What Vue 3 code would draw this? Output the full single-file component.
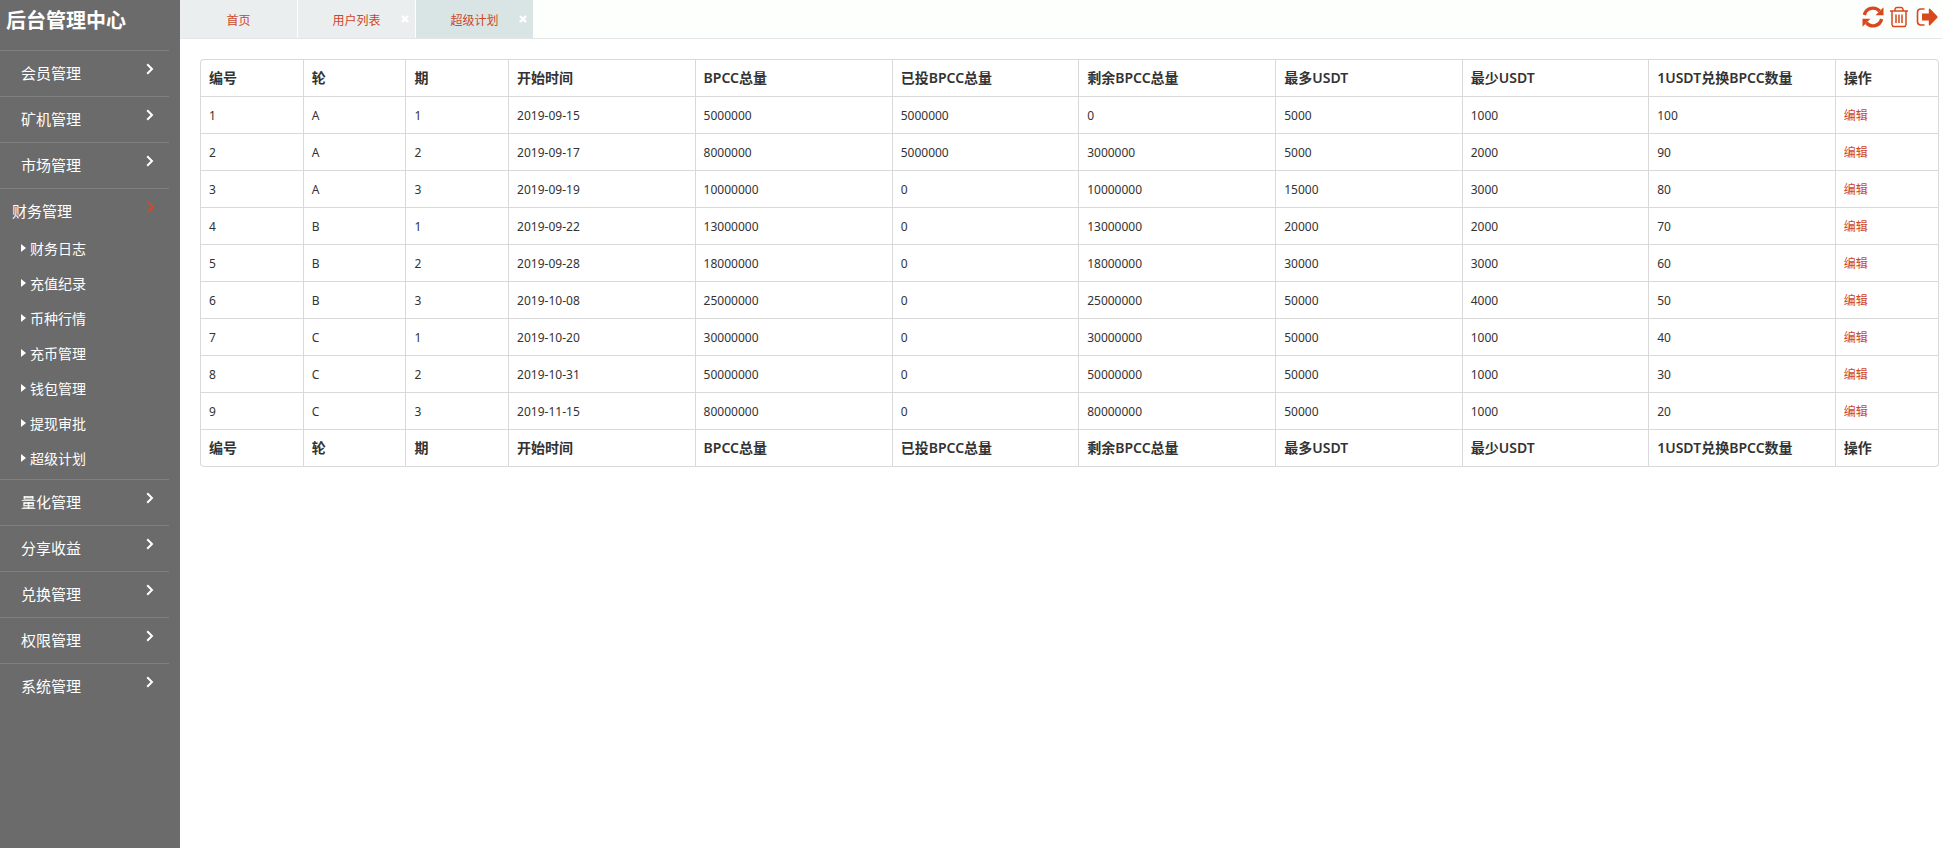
<script setup>
import { ref } from 'vue'

const menus = [
  { name: '会员管理' },
  { name: '矿机管理' },
  { name: '市场管理' },
  {
    name: '财务管理',
    children: ['财务日志', '充值纪录', '币种行情', '充币管理', '钱包管理', '提现审批', '超级计划'],
  },
  { name: '量化管理' },
  { name: '分享收益' },
  { name: '兑换管理' },
  { name: '权限管理' },
  { name: '系统管理' },
]
const openMenu = ref('财务管理')
const toggle = (name) => {
  openMenu.value = openMenu.value === name ? '' : name
}

const tabs = ref([
  { name: '首页', closable: false },
  { name: '用户列表', closable: true },
  { name: '超级计划', closable: true },
])
const activeTab = ref('超级计划')
const closeTab = (name) => {
  tabs.value = tabs.value.filter((t) => t.name !== name)
}

const columns = [
  { label: '编号', size: 'narrow' },
  { label: '轮', size: 'narrow' },
  { label: '期', size: 'narrow' },
  { label: '开始时间', size: 'medium' },
  { label: 'BPCC总量', size: 'wide' },
  { label: '已投BPCC总量', size: 'medium' },
  { label: '剩余BPCC总量', size: 'wide' },
  { label: '最多USDT', size: 'medium' },
  { label: '最少USDT', size: 'medium' },
  { label: '1USDT兑换BPCC数量', size: 'medium' },
  { label: '操作', size: 'rest' },
]
const rows = [
  [1, 'A', 1, '2019-09-15', 5000000, 5000000, 0, 5000, 1000, 100],
  [2, 'A', 2, '2019-09-17', 8000000, 5000000, 3000000, 5000, 2000, 90],
  [3, 'A', 3, '2019-09-19', 10000000, 0, 10000000, 15000, 3000, 80],
  [4, 'B', 1, '2019-09-22', 13000000, 0, 13000000, 20000, 2000, 70],
  [5, 'B', 2, '2019-09-28', 18000000, 0, 18000000, 30000, 3000, 60],
  [6, 'B', 3, '2019-10-08', 25000000, 0, 25000000, 50000, 4000, 50],
  [7, 'C', 1, '2019-10-20', 30000000, 0, 30000000, 50000, 1000, 40],
  [8, 'C', 2, '2019-10-31', 50000000, 0, 50000000, 50000, 1000, 30],
  [9, 'C', 3, '2019-11-15', 80000000, 0, 80000000, 50000, 1000, 20],
]
</script>

<template>
  <div class="layout">
    <aside class="sidebar">
      <h1 class="brand">后台管理中心</h1>
      <nav>
        <section
          v-for="menu in menus"
          :key="menu.name"
          class="group"
          :class="{ open: menu.children && openMenu === menu.name }"
        >
          <button type="button" class="group-head" @click="toggle(menu.name)">
            <span>{{ menu.name }}</span>
            <svg class="chevron" viewBox="0 0 8 12" aria-hidden="true">
              <path d="M1.2 1.2 6 6l-4.8 4.8" fill="none" stroke="currentColor" stroke-width="2" />
            </svg>
          </button>
          <ul v-if="menu.children && openMenu === menu.name" class="sub">
            <li v-for="child in menu.children" :key="child">
              <a href="#" @click.prevent>
                <svg class="caret" viewBox="0 0 5 8" aria-hidden="true">
                  <path d="M0 0l5 4-5 4z" fill="currentColor" />
                </svg>
                {{ child }}
              </a>
            </li>
          </ul>
        </section>
      </nav>
    </aside>

    <div class="content">
      <header class="topbar">
        <div class="tabs">
          <div
            v-for="tab in tabs"
            :key="tab.name"
            class="tab"
            :class="{ active: tab.name === activeTab }"
          >
            <button type="button" class="tab-name" @click="activeTab = tab.name">{{ tab.name }}</button>
            <button
              v-if="tab.closable"
              type="button"
              class="tab-close"
              aria-label="关闭"
              @click="closeTab(tab.name)"
            >
              <svg viewBox="0 0 8 8" aria-hidden="true">
                <path d="M1 1l6 6M7 1L1 7" stroke="currentColor" stroke-width="2.4" />
              </svg>
            </button>
          </div>
        </div>
        <div class="tools">
          <button type="button" aria-label="刷新">
            <svg viewBox="0 0 22 22" aria-hidden="true">
              <path d="M2.4 9A8.8 8.8 0 0 1 17.6 5.2M19.6 13A8.8 8.8 0 0 1 4.4 16.8" fill="none" stroke="currentColor" stroke-width="3.4" />
              <path d="M21.5 1.2v8h-8zM.5 20.8v-8h8z" fill="currentColor" />
            </svg>
          </button>
          <button type="button" aria-label="删除">
            <svg viewBox="0 0 22 22" aria-hidden="true">
              <path d="M1 5h18M6 5V3.200Q6.400 1.400 8 1.400h4q1.600 0 2 1.800V5M3 5.500V18.500q.2 2 2 2.100h10q1.800-.1 2-2.100V5.500M7 8.600v8.400M10 8.600v8.400M13 8.600v8.400" fill="none" stroke="currentColor" stroke-width="1.500" />
            </svg>
          </button>
          <button type="button" aria-label="退出">
            <svg viewBox="0 0 22 22" aria-hidden="true">
              <path d="M8.500 3H4.800Q1.500 3 1.500 6.200v9.600Q1.500 19 4.800 19H8.500" fill="none" stroke="currentColor" stroke-width="1.600" />
              <path d="M6 7.500h6.800V3.200q.5-1 1.300-.4l7.200 7.500q.6.700 0 1.400l-7.200 7.500q-.8.600-1.300-.4v-4.300H6z" fill="currentColor" />
            </svg>
          </button>
        </div>
      </header>

      <main class="page">
        <table class="grid">
          <colgroup>
            <col v-for="col in columns" :key="col.label" :class="col.size" />
          </colgroup>
          <thead>
            <tr>
              <th v-for="col in columns" :key="col.label" scope="col">{{ col.label }}</th>
            </tr>
          </thead>
          <tbody>
            <tr v-for="row in rows" :key="row[0]">
              <td v-for="(cell, i) in row" :key="i">{{ cell }}</td>
              <td><a href="#" @click.prevent>编辑</a></td>
            </tr>
          </tbody>
          <tfoot>
            <tr>
              <th v-for="col in columns" :key="col.label">{{ col.label }}</th>
            </tr>
          </tfoot>
        </table>
      </main>
    </div>
  </div>
</template>

<style>
body {
  background: #fff;
}
</style>

<style scoped>
.layout {
  display: flex;
  min-height: 100vh;
  color: #333;
  font-family: "Noto Sans", "Noto Sans CJK SC", sans-serif;
  font-size: 12px;
}
button {
  margin: 0;
  padding: 0;
  border: 0;
  background: none;
  color: inherit;
  font: inherit;
  cursor: pointer;
}
svg {
  display: block;
}
a {
  color: #ce4628;
  text-decoration: none;
}

.sidebar {
  flex: 0 0 180px;
  box-sizing: border-box;
  padding-right: 11px;
  background: #6b6b6b;
  color: #fff;
}
.brand {
  margin: 0;
  padding: 0 6px;
  height: 50px;
  font-size: 20px;
  line-height: 42px;
  font-weight: 700;
}
.group {
  border-top: 1px solid #808080;
}
.group-head {
  display: flex;
  justify-content: space-between;
  align-items: center;
  width: 100%;
  height: 45px;
  padding: 0 15px 2px 21px;
  font-size: 15px;
}
.chevron {
  width: 8px;
  height: 12px;
  margin-bottom: 8px;
}
.open .group-head {
  height: 41px;
  padding: 2px 14px 0 12px;
}
.open .chevron {
  color: #d5482c;
}
.sub {
  margin: 0;
  padding: 0 0 4px;
  list-style: none;
}
.sub a {
  display: flex;
  align-items: center;
  gap: 4px;
  height: 35px;
  padding-left: 21px;
  color: #fff;
  font-size: 14px;
}
.caret {
  width: 5px;
  height: 8px;
}

.content {
  flex: 1;
  min-width: 0;
}
.topbar {
  display: flex;
  justify-content: space-between;
  height: 38px;
  border-bottom: 1px solid #e4e7e7;
  background: #fdfffd;
}
.tabs {
  display: flex;
  gap: 1px;
}
.tab {
  position: relative;
  width: 117px;
  background: #ebeeee;
  color: #ce4628;
}
.tab.active {
  background: #d9e5e5;
}
.tab-name {
  width: 100%;
  height: 40px;
}
.tab-close {
  position: absolute;
  top: 15px;
  right: 6px;
  color: #fff;
}
.tab-close svg {
  width: 8px;
  height: 8px;
}
.tools {
  display: flex;
  gap: 5px;
  padding: 6px 4px 0 0;
  color: #d9481c;
}
.tools button {
  height: 22px;
}
.tools svg {
  width: 22px;
  height: 22px;
}

.page {
  padding: 20px 3px 20px 20px;
}
.grid {
  width: 100%;
  table-layout: fixed;
  border: 1px solid #d9d9d9;
  border-width: 1px 0 0 1px;
  border-radius: 4px;
  border-spacing: 0;
}
.narrow {
  width: 5.91%;
}
.medium {
  width: 10.73%;
}
.wide {
  width: 11.34%;
}
.grid th,
.grid td {
  box-sizing: border-box;
  height: 37px;
  padding: 0 8px;
  border: 1px solid #d9d9d9;
  border-width: 0 1px 1px 0;
  text-align: left;
  white-space: nowrap;
}
.grid th {
  padding-bottom: 2px;
  font-size: 14px;
  font-weight: 600;
}
.grid thead th:last-child {
  border-top-right-radius: 4px;
}
.grid tfoot th:first-child {
  border-bottom-left-radius: 4px;
}
.grid tfoot th:last-child {
  border-bottom-right-radius: 4px;
}
</style>
